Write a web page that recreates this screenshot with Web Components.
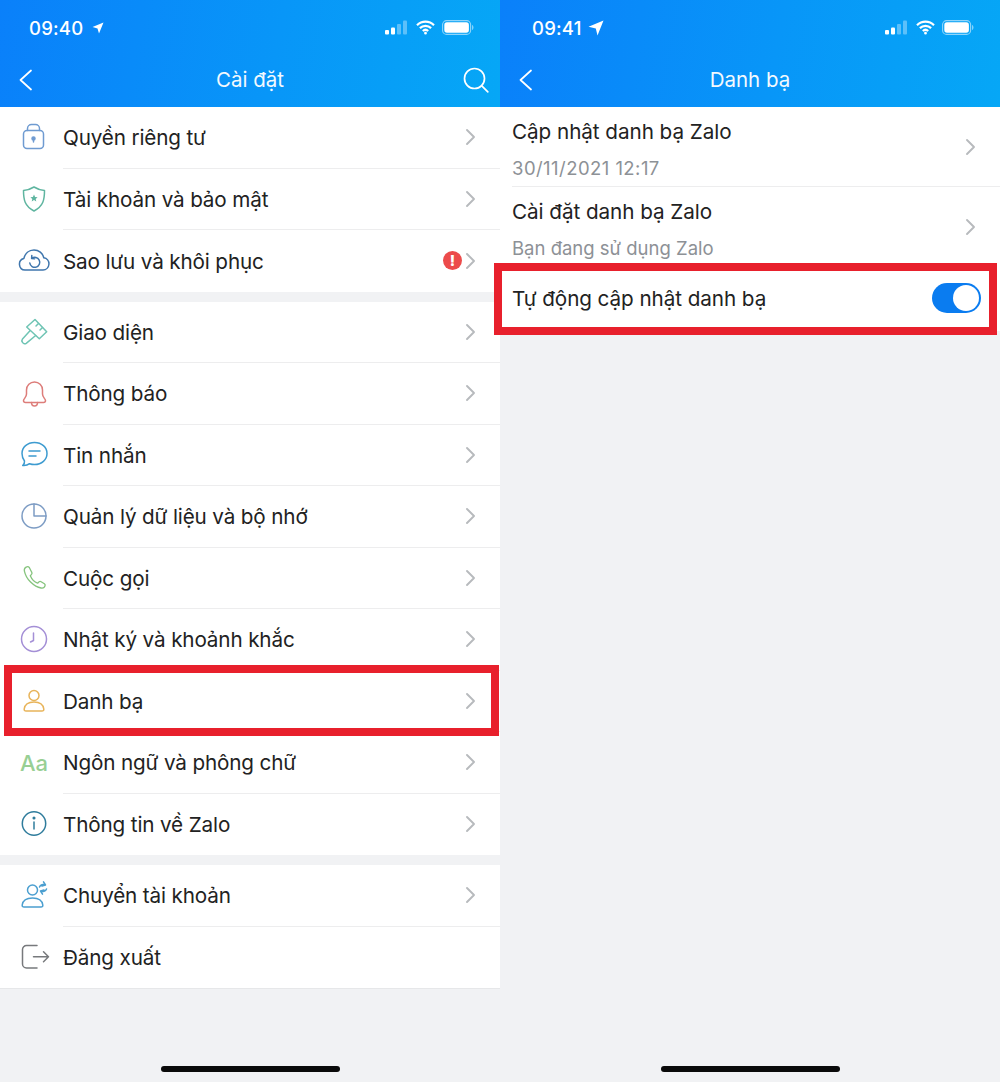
<!DOCTYPE html>
<html lang="vi">
<head>
<meta charset="utf-8">
<title>Zalo</title>
<style>
  html, body { margin: 0; padding: 0; }
  body { width: 1000px; height: 1082px; overflow: hidden; background: #f1f2f4; position: relative; font-family: Inter, "Noto Sans", sans-serif; }
  .screens { display: flex; }
  svg.ic { width: 32px; height: 32px; fill: none; stroke-width: 1.5; stroke-linecap: round; stroke-linejoin: round; display: block; }
</style>
</head>
<body>
<div class="screens">
  <phone-screen>
    <app-header slot="header" time="09:40" title="Cài đặt" search></app-header>
    <list-group>
      <setting-row label="Quyền riêng tư">
        <svg slot="icon" class="ic" viewBox="0 0 32 32" stroke="#6f9bd1"><rect x="5.500" y="8.500" width="20" height="18" rx="3.500"/><path d="M9.500 8.500V6.500a4 4 0 0 1 4-4h4a4 4 0 0 1 4 4v2"/><circle cx="15.500" cy="16.500" r="1.500" fill="#6f9bd1"/><path d="M15.500 17v3"/></svg>
      </setting-row>
      <setting-row label="Tài khoản và bảo mật">
        <svg slot="icon" class="ic" viewBox="0 0 32 32" stroke="#5fb5a0"><path d="M16 4c3.500 2.200 7 3.200 10.500 3.500 0 9-1 15.500-10.500 20.500C6.500 23 5.500 16.500 5.500 7.500 9 7.200 12.500 6.200 16 4z"/><path d="M16 11.500l1.100 2.400 2.500.3-1.900 1.700.6 2.500-2.300-1.300-2.300 1.300.6-2.500-1.900-1.700 2.500-.3z" fill="#5fb5a0" stroke="none"/></svg>
      </setting-row>
      <setting-row label="Sao lưu và khôi phục" last alert>
        <svg slot="icon" class="ic" viewBox="0 0 32 32" stroke="#3f76ad"><path d="M7 25a5.800 5.800 0 0 1-1.200-11.400C7 8.500 11 5 16 5c4.800 0 8.700 3.300 9.800 7.700A6.200 6.200 0 0 1 25 25z"/><path d="M13.800 10.500l-.2 3 3 .2M13.800 13.300a5 5 0 1 1-2 4.700"/></svg>
      </setting-row>
    </list-group>
    <list-group>
      <setting-row label="Giao diện">
        <svg slot="icon" class="ic" viewBox="0 0 32 32" stroke="#6fc4b4"><path d="M17 3.500l11.700 12.200-7.400 7L8.700 11z"/><path d="M12 14.800l-7.500 8.200c-.8 1-.8 2.200 0 3.400 1 1.500 2.600 1.700 3.700.9l9.500-7.800"/><path d="M20.500 7.500l-2.500 2.500M24.500 11.500l-2.500 2.500"/></svg>
      </setting-row>
      <setting-row label="Thông báo">
        <svg slot="icon" class="ic" viewBox="0 0 32 32" stroke="#dd7d7a"><path d="M5.500 22.500c0-1.800 3-3 3-6.500V12a8 8 0 0 1 16 0v4c0 3.500 3 4.700 3 6.500 0 1.300-1 2-2 2h-18c-1 0-2-.7-2-2z"/><path d="M13.500 24.500c0 2.200 1.300 3.500 3 3.500s3-1.300 3-3.500"/></svg>
      </setting-row>
      <setting-row label="Tin nhắn">
        <svg slot="icon" class="ic" viewBox="0 0 32 32" stroke="#3d9bd0"><path d="M16.500 3.500c7.200 0 12.500 4.800 12.500 11s-5.300 11-12.500 11c-1.800 0-3.500-.3-5-.8-1.600 1.300-4 2.100-6.800 1.800 1.300-1.100 2-2.800 1.800-4.500C4.700 19.600 4 17.200 4 14.500c0-6.200 5.300-11 12.500-11z"/><path d="M11 12h11M11 17h7"/></svg>
      </setting-row>
      <setting-row label="Quản lý dữ liệu và bộ nhớ">
        <svg slot="icon" class="ic" viewBox="0 0 32 32" stroke="#7d9cc4"><circle cx="16" cy="15" r="12"/><path d="M16 3v12h12"/></svg>
      </setting-row>
      <setting-row label="Cuộc gọi">
        <svg slot="icon" class="ic" viewBox="0 0 32 32" stroke="#86c47e"><g transform="translate(2 2) scale(.88)"><path d="M7 3.500c-1.500.8-2.500 2.300-2 4.500 1 4.500 3.500 9 7 12.500 3.500 3.400 7.500 6 12 6.800 2.200.4 4-1 4.500-2.800.2-.8-.1-1.500-.8-2l-3.700-2.400c-.8-.5-1.700-.4-2.400.2l-1.600 1.500c-3-1.200-6.800-5-8.300-8.500l1.400-1.500c.6-.7.700-1.700.2-2.500L10.700 4.200C9.800 3 8.300 2.800 7 3.500z"/></g></svg>
      </setting-row>
      <setting-row label="Nhật ký và khoảnh khắc">
        <svg slot="icon" class="ic" viewBox="0 0 32 32" stroke="#a48fd6"><circle cx="16" cy="15" r="12.500"/><path d="M15.500 9v7.500l-3 1.500"/></svg>
      </setting-row>
      <setting-row label="Danh bạ">
        <svg slot="icon" class="ic" viewBox="0 0 32 32" stroke="#e8b45a"><circle cx="16" cy="10.500" r="5"/><path d="M8 26c-1.200 0-2-.8-1.800-2 .6-4.200 4.300-7 9.800-7s9.200 2.800 9.800 7c.2 1.200-.6 2-1.800 2z"/></svg>
      </setting-row>
      <setting-row label="Ngôn ngữ và phông chữ">
        <span slot="icon" style="display:block;font:500 22px/32px Inter, sans-serif;color:#98cf94;margin-left:2px;white-space:nowrap;">Aa</span>
      </setting-row>
      <setting-row label="Thông tin về Zalo" last>
        <svg slot="icon" class="ic" viewBox="0 0 32 32" stroke="#2f7c9c"><circle cx="16" cy="15.500" r="11.700"/><path d="M16 14v7"/><circle cx="16" cy="10" r=".8" fill="#2f7c9c"/></svg>
      </setting-row>
    </list-group>
    <list-group bordered>
      <setting-row label="Chuyển tài khoản">
        <svg slot="icon" class="ic" viewBox="0 0 32 32" stroke="#4b9fd0"><circle cx="14.500" cy="10" r="5"/><path d="M6 27c-1.200 0-2-.8-1.800-2 .6-4.200 4-7 10.300-7s9.700 2.800 10.300 7c.2 1.200-.6 2-1.800 2z"/><path d="M21.500 7c.8-2.300 3.700-3.200 5.800-2M25.500 1.800l2 3.200-3.500 1M28.500 9c-.8 2.300-3.700 3.200-5.800 2M24.500 14.200l-2-3.200 3.500-1"/></svg>
      </setting-row>
      <setting-row label="Đăng xuất" nochev last>
        <svg slot="icon" class="ic" viewBox="0 0 32 32" stroke="#77797c"><path d="M19 4.500H8.500a4 4 0 0 0-4 4v14.500a4 4 0 0 0 4 4H19"/><path d="M15.500 15.700h15M25.500 10.700l5 5-5 5"/></svg>
      </setting-row>
    </list-group>
    <home-bar slot="footer"></home-bar>
  </phone-screen>

  <phone-screen>
    <app-header slot="header" time="09:41" title="Danh bạ" big-arrow></app-header>
    <list-group>
      <detail-row label="Cập nhật danh bạ Zalo" sub="30/11/2021 12:17" style="--sub-spacing:.45px"></detail-row>
      <detail-row label="Cài đặt danh bạ Zalo" sub="Bạn đang sử dụng Zalo" last></detail-row>
      <toggle-row label="Tự động cập nhật danh bạ"></toggle-row>
    </list-group>
    <home-bar slot="footer"></home-bar>
  </phone-screen>
</div>
<red-box style="left:4px;top:665px;width:495px;height:71px;"></red-box>
<red-box style="left:494px;top:263px;width:503px;height:72px;"></red-box>

<script>
var chevron = '<svg width="11" height="18" viewBox="0 0 11 18" fill="none" stroke="#b7babd" stroke-width="1.900" stroke-linecap="round" stroke-linejoin="round"><path d="M2 2l7 7-7 7"/></svg>';

class PhoneScreen extends HTMLElement {
  connectedCallback() {
    this.attachShadow({ mode: 'open' }).innerHTML = `
      <style>
        :host { display: flex; flex-direction: column; width: 500px; height: 1082px; background: #f1f2f4; position: relative; overflow: hidden; color: #222; font-family: Inter, "Noto Sans", sans-serif; }
        .body { flex: 1; }
      </style>
      <slot name="header"></slot>
      <div class="body"><slot></slot></div>
      <slot name="footer"></slot>`;
  }
}

class AppHeader extends HTMLElement {
  connectedCallback() {
    var big = this.hasAttribute('big-arrow');
    var search = this.hasAttribute('search') ? '<svg class="search" width="26" height="26" viewBox="0 0 26 26" fill="none" stroke="#fff" stroke-width="1.700" stroke-linecap="round"><circle cx="11.500" cy="11.500" r="10"/><path d="M18.800 18.800l6 6"/></svg>' : '';
    var arrow = big
      ? '<svg width="16" height="16" viewBox="0 0 16 16" fill="#fff"><path d="M15.500.5L9.500 15.500 7.800 8.500.5 6.700z"/></svg>'
      : '<svg width="12" height="12" viewBox="0 0 12 12" fill="#fff"><path d="M11.500.5L7 11.500 5.500 6.500.5 5z"/></svg>';
    this.attachShadow({ mode: 'open' }).innerHTML = `
      <style>
        :host { display: block; height: 107px; background: linear-gradient(100deg, #0a80fa 0%, #0896f8 55%, #06a7f6 100%); color: #fff; }
        .status { height: 53px; display: flex; align-items: center; padding: 2px 26px 0 ${big ? 32 : 29}px; box-sizing: border-box; }
        .time { font-size: 18.500px; font-weight: 500; letter-spacing: .2px; }
        .loc { margin-left: ${big ? 6 : 9}px; display: flex; }
        .right { margin-left: auto; display: flex; align-items: center; gap: 7px; }
        .sig { margin-right: 1px; }
        .nav { height: 54px; display: grid; grid-template-columns: 64px 1fr 64px; align-items: center; padding-bottom: 1px; box-sizing: border-box; }
        .back { padding-left: 19px; display: flex; }
        .title { text-align: center; font-size: 20.500px; font-weight: 400; opacity: .95; }
        .act { display: flex; justify-content: flex-end; padding-right: 11px; }
      </style>
      <div class="status">
        <span class="time">${this.getAttribute('time')}</span>
        <span class="loc">${arrow}</span>
        <span class="right">
          <svg class="sig" width="23" height="15" viewBox="0 0 23 15" fill="#fff"><rect x="0" y="10" width="4" height="4.500" rx="1"/><rect x="6" y="7.500" width="4" height="7" rx="1"/><rect x="12" y="4" width="4" height="10.500" rx="1" opacity=".35"/><rect x="18" y="0.500" width="4" height="14" rx="1" opacity=".35"/></svg>
          <svg width="19" height="15" viewBox="0 0 19 15" fill="none" stroke="#fff" stroke-width="2.200" stroke-linecap="butt"><path d="M1 5.200a12 12 0 0 1 17 0M3.900 8.100a8 8 0 0 1 11.200 0M6.800 11a4 4 0 0 1 5.400 0"/><circle cx="9.500" cy="13.200" r=".7" fill="#fff" stroke-width="1.400"/></svg>
          <svg width="32" height="15" viewBox="0 0 32 15"><rect x=".6" y=".6" width="28" height="13.800" rx="4" fill="none" stroke="#fff" stroke-opacity=".55" stroke-width="1.100"/><rect x="2.300" y="2.300" width="24.600" height="10.400" rx="2.600" fill="#fff"/><path d="M30 5v5c.9-.3 1.500-1.400 1.500-2.500S30.900 5.300 30 5z" fill="#fff" fill-opacity=".5"/></svg>
        </span>
      </div>
      <div class="nav">
        <span class="back"><svg width="13" height="22" viewBox="0 0 13 22" fill="none" stroke="#fff" stroke-width="1.700" stroke-linecap="round" stroke-linejoin="round"><path d="M12 1.500L1.500 11 12 20.500"/></svg></span>
        <span class="title">${this.getAttribute('title')}</span>
        <span class="act">${search}</span>
      </div>`;
  }
}

class ListGroup extends HTMLElement {
  connectedCallback() {
    this.attachShadow({ mode: 'open' }).innerHTML = `
      <style>
        :host { display: block; background: #fff; margin-bottom: 10px; }
        :host([bordered]) { border-bottom: 1px solid #e6e7e9; }
      </style>
      <slot></slot>`;
  }
}

class SettingRow extends HTMLElement {
  connectedCallback() {
    var alert = this.hasAttribute('alert') ? '<span class="alert">!</span>' : '';
    var chev = this.hasAttribute('nochev') ? '' : chevron;
    this.attachShadow({ mode: 'open' }).innerHTML = `
      <style>
        :host { display: flex; height: 61.500px; align-items: stretch; }
        .icon { width: 63px; flex: none; display: flex; align-items: center; padding-left: 18px; box-sizing: border-box; }
        .main { flex: 1; display: flex; align-items: center; padding-right: 24px; border-bottom: 1px solid #ededee; box-sizing: border-box; }
        :host([last]) .main { border-bottom: 0; }
        .label { flex: 1; font-size: 20.700px; letter-spacing: -.15px; color: #222; white-space: nowrap; padding-top: 1px; }
        .alert { width: 19px; height: 19px; border-radius: 50%; background: #ec4b4b; color: #fff; font-size: 15px; font-weight: 800; line-height: 19px; text-align: center; margin-right: 3px; }
        svg { display: block; }
      </style>
      <div class="icon"><slot name="icon"></slot></div>
      <div class="main"><span class="label">${this.getAttribute('label')}</span>${alert}${chev}</div>`;
  }
}

class DetailRow extends HTMLElement {
  connectedCallback() {
    this.attachShadow({ mode: 'open' }).innerHTML = `
      <style>
        :host { display: block; padding-left: 12px; height: 80px; box-sizing: border-box; }
        .wrap { height: 100%; display: flex; align-items: center; padding-right: 24px; border-bottom: 1px solid #ededee; box-sizing: border-box; }
        :host([last]) .wrap { border-bottom: 0; }
        .text { flex: 1; display: flex; flex-direction: column; gap: 13px; margin-top: 4px; }
        .label { font-size: 20.700px; letter-spacing: -.06px; color: #222; }
        .sub { font-size: 18.500px; color: #8d9196; letter-spacing: var(--sub-spacing, 0); }
        svg { flex: none; }
      </style>
      <div class="wrap">
        <div class="text"><span class="label">${this.getAttribute('label')}</span><span class="sub">${this.getAttribute('sub')}</span></div>
        ${chevron}
      </div>`;
  }
}

class ToggleRow extends HTMLElement {
  connectedCallback() {
    this.attachShadow({ mode: 'open' }).innerHTML = `
      <style>
        :host { display: flex; height: 64px; align-items: center; padding: 0 19px 2px 12px; box-sizing: border-box; background: #fff; }
        .label { flex: 1; font-size: 20.700px; letter-spacing: -.08px; color: #222; }
        .sw { width: 49px; height: 30px; border-radius: 15px; background: #0a7cf0; display: flex; justify-content: flex-end; align-items: center; padding: 2px; box-sizing: border-box; }
        .knob { width: 26px; height: 26px; border-radius: 50%; background: #fff; }
      </style>
      <span class="label">${this.getAttribute('label')}</span>
      <span class="sw"><span class="knob"></span></span>`;
  }
}

class HomeBar extends HTMLElement {
  connectedCallback() {
    this.attachShadow({ mode: 'open' }).innerHTML = `
      <style>
        :host { display: flex; justify-content: center; height: 16px; }
        div { width: 179px; height: 6px; border-radius: 3px; background: #0a0a0a; }
      </style>
      <div></div>`;
  }
}

// annotation frames drawn over the screenshots
class RedBox extends HTMLElement {
  connectedCallback() {
    this.attachShadow({ mode: 'open' }).innerHTML = `
      <style>
        :host { display: block; position: absolute; box-sizing: border-box; border: 8px solid #e8202c; pointer-events: none; }
      </style>`;
  }
}

customElements.define('phone-screen', PhoneScreen);
customElements.define('app-header', AppHeader);
customElements.define('list-group', ListGroup);
customElements.define('setting-row', SettingRow);
customElements.define('detail-row', DetailRow);
customElements.define('toggle-row', ToggleRow);
customElements.define('home-bar', HomeBar);
customElements.define('red-box', RedBox);
</script>
</body>
</html>
